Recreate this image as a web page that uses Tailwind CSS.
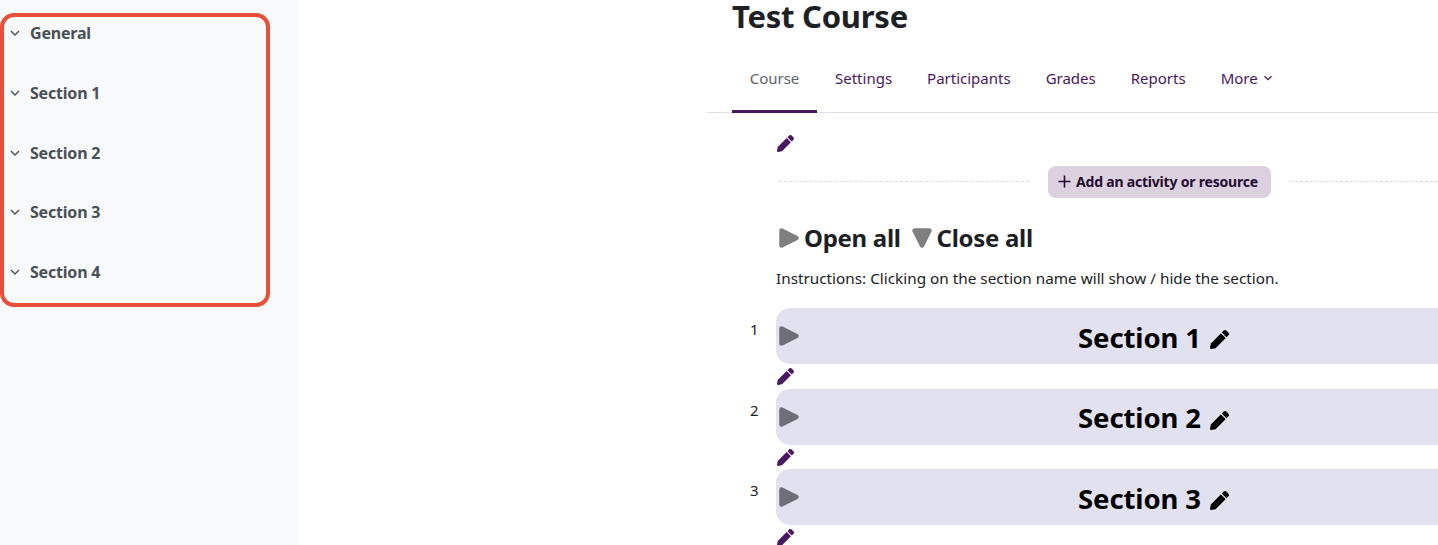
<!DOCTYPE html>
<html><head><meta charset="utf-8"><script src="https://cdn.jsdelivr.net/npm/@tailwindcss/browser@4"></script></head>
<body class="bg-white overflow-hidden font-['Noto_Sans','Open_Sans',sans-serif]">
<svg class="hidden"><defs>
<symbol id="pen" viewBox="0 0 512 512"><path fill="currentColor" d="M497.9 142.1l-46.1 46.1c-4.7 4.7-12.3 4.7-17 0l-111-111c-4.7-4.7-4.7-12.3 0-17l46.1-46.1c18.7-18.7 49.1-18.7 67.9 0l60.1 60.1c18.8 18.7 18.8 49.1 0 67.9zM284.2 99.8L21.6 362.4.4 483.9c-2.9 16.4 11.4 30.6 27.8 27.8l121.5-21.3 262.6-262.6c4.7-4.7 4.7-12.3 0-17l-111-111c-4.8-4.7-12.4-4.7-17.1 0z"/></symbol>
<symbol id="tri" viewBox="0 0 22 22"><path fill="currentColor" stroke="currentColor" stroke-width="4.5" stroke-linejoin="round" d="M3.5 3.5 L18.5 11 L3.5 18.5 Z"/></symbol>
</defs></svg>
<div class="flex h-[545px] w-[1438px] overflow-hidden">
  <aside class="w-[298px] shrink-0 bg-[#f8f9fa] pt-[13px]">
    <div class="h-[294px] w-[270px] border-[4px] border-[#e8503a] rounded-[14px] pt-[6px] pl-[5px] text-[16px] leading-[20px] font-bold text-[#495057] flex flex-col gap-[39.8px] tracking-[-0.2px]">
      <div class="flex items-center gap-[9px]"><svg class="w-[12px] h-[12px] text-[#495057]" viewBox="0 0 12 12" fill="none" stroke="currentColor" stroke-width="1.4"><path d="M2 4l4 4 4-4"/></svg><span>General</span></div>
      <div class="flex items-center gap-[9px]"><svg class="w-[12px] h-[12px]" viewBox="0 0 12 12" fill="none" stroke="currentColor" stroke-width="1.4"><path d="M2 4l4 4 4-4"/></svg><span>Section 1</span></div>
      <div class="flex items-center gap-[9px]"><svg class="w-[12px] h-[12px]" viewBox="0 0 12 12" fill="none" stroke="currentColor" stroke-width="1.4"><path d="M2 4l4 4 4-4"/></svg><span>Section 2</span></div>
      <div class="flex items-center gap-[9px]"><svg class="w-[12px] h-[12px]" viewBox="0 0 12 12" fill="none" stroke="currentColor" stroke-width="1.4"><path d="M2 4l4 4 4-4"/></svg><span>Section 3</span></div>
      <div class="flex items-center gap-[9px]"><svg class="w-[12px] h-[12px]" viewBox="0 0 12 12" fill="none" stroke="currentColor" stroke-width="1.4"><path d="M2 4l4 4 4-4"/></svg><span>Section 4</span></div>
    </div>
  </aside>
  <main class="ml-[409px] w-[731px] shrink-0">
    <h1 class="pl-[25px] h-[35px] text-[31px] leading-[33px] font-bold text-[#1d2125] tracking-[-0.25px]">Test Course</h1>
    <nav class="mt-[9px] h-[69px] border-b border-[#dee2e6] pl-[25px] flex text-[15px] leading-[18px] text-[#4a1762]">
      <div class="w-[85px] h-[69px] border-b-[3px] border-[#4a1762] text-center pt-[25px] text-[#5c636a]">Course</div>
      <div class="ml-[18px] pt-[25px]">Settings</div>
      <div class="ml-[35px] pt-[25px]">Participants</div>
      <div class="ml-[35px] pt-[25px]">Grades</div>
      <div class="ml-[35px] pt-[25px]">Reports</div>
      <div class="ml-[35px] pt-[25px] flex items-start gap-[5px]"><span>More</span><svg class="w-[10px] h-[10px] mt-[4px]" viewBox="0 0 10 10" fill="none" stroke="currentColor" stroke-width="1.3"><path d="M1.5 3.2l3.5 3.5 3.5-3.5"/></svg></div>
    </nav>
    <div class="pl-[69px]">
      <svg class="w-[17px] h-[17px] ml-[1px] mt-[22px] text-[#4a1762]"><use href="#pen"/></svg>
      <div class="mt-[14px] flex items-center h-[32px]">
        <div class="w-[250px] ml-[3px] -mt-[1px] border-t border-dashed border-[#d8dce0]"></div>
        <div class="ml-[19px] w-[223px] h-[32px] shrink-0 rounded-[8px] bg-[#dbd1df] text-[14px] font-bold text-[#250c31] flex items-center pl-[10px] pb-[2px] gap-[5px] tracking-[-0.2px]">
          <svg class="w-[13px] h-[13px] mt-[1px]" viewBox="0 0 13 13" fill="none" stroke="currentColor" stroke-width="1.6"><path d="M6.5 0.5v12M0.5 6.5h12"/></svg><span>Add an activity or resource</span>
        </div>
        <div class="ml-[19px] -mt-[1px] flex-1 border-t border-dashed border-[#d8dce0]"></div>
      </div>
      <div class="mt-[23px] h-[34px] flex items-center text-[24px] leading-[34px] font-bold text-[#1d2125] tracking-[-0.3px]">
        <svg class="w-[22px] h-[22px] ml-[2px] mr-[4px] text-[#7f7f7f]"><use href="#tri"/></svg><span>Open all</span>
        <svg class="w-[22px] h-[22px] ml-[10px] mr-[4px] text-[#7f7f7f] rotate-90"><use href="#tri"/></svg><span>Close all</span>
      </div>
      <p class="mt-[12px] text-[15.3px] leading-[22px] text-[#1d2125]">Instructions: Clicking on the section name will show / hide the section.</p>
      <div class="mt-[19px] flex flex-col">
        <div class="relative h-[56px] w-[755px] rounded-[14px] bg-[#e2e1f0] flex items-center justify-center text-[27.5px] font-bold text-black tracking-[-0.1px]">
          <span class="absolute left-[-26px] top-[10px] text-[15px] font-normal text-[#1d2125]">1</span>
          <svg class="absolute left-[2px] top-[17px] w-[22px] h-[22px] text-[#6f6f7a]"><use href="#tri"/></svg>
          <span class="mt-[3px]">Section 1</span><svg class="w-[19px] h-[19px] ml-[9px] mt-[7px]"><use href="#pen"/></svg>
        </div>
        <svg class="w-[17px] h-[17px] ml-[1px] mt-[4px] mb-[3.5px] text-[#4a1762]"><use href="#pen"/></svg>
        <div class="relative h-[56px] w-[755px] rounded-[14px] bg-[#e2e1f0] flex items-center justify-center text-[27.5px] font-bold text-black tracking-[-0.1px]">
          <span class="absolute left-[-26px] top-[10px] text-[15px] font-normal text-[#1d2125]">2</span>
          <svg class="absolute left-[2px] top-[17px] w-[22px] h-[22px] text-[#6f6f7a]"><use href="#tri"/></svg>
          <span class="mt-[3px]">Section 2</span><svg class="w-[19px] h-[19px] ml-[9px] mt-[7px]"><use href="#pen"/></svg>
        </div>
        <svg class="w-[17px] h-[17px] ml-[1px] mt-[4px] mb-[3.5px] text-[#4a1762]"><use href="#pen"/></svg>
        <div class="relative h-[56px] w-[755px] rounded-[14px] bg-[#e2e1f0] flex items-center justify-center text-[27.5px] font-bold text-black tracking-[-0.1px]">
          <span class="absolute left-[-26px] top-[10px] text-[15px] font-normal text-[#1d2125]">3</span>
          <svg class="absolute left-[2px] top-[17px] w-[22px] h-[22px] text-[#6f6f7a]"><use href="#tri"/></svg>
          <span class="mt-[3px]">Section 3</span><svg class="w-[19px] h-[19px] ml-[9px] mt-[7px]"><use href="#pen"/></svg>
        </div>
        <svg class="w-[17px] h-[17px] ml-[1px] mt-[4px] text-[#4a1762]"><use href="#pen"/></svg>
      </div>
    </div>
  </main>
</div>
</body></html>
